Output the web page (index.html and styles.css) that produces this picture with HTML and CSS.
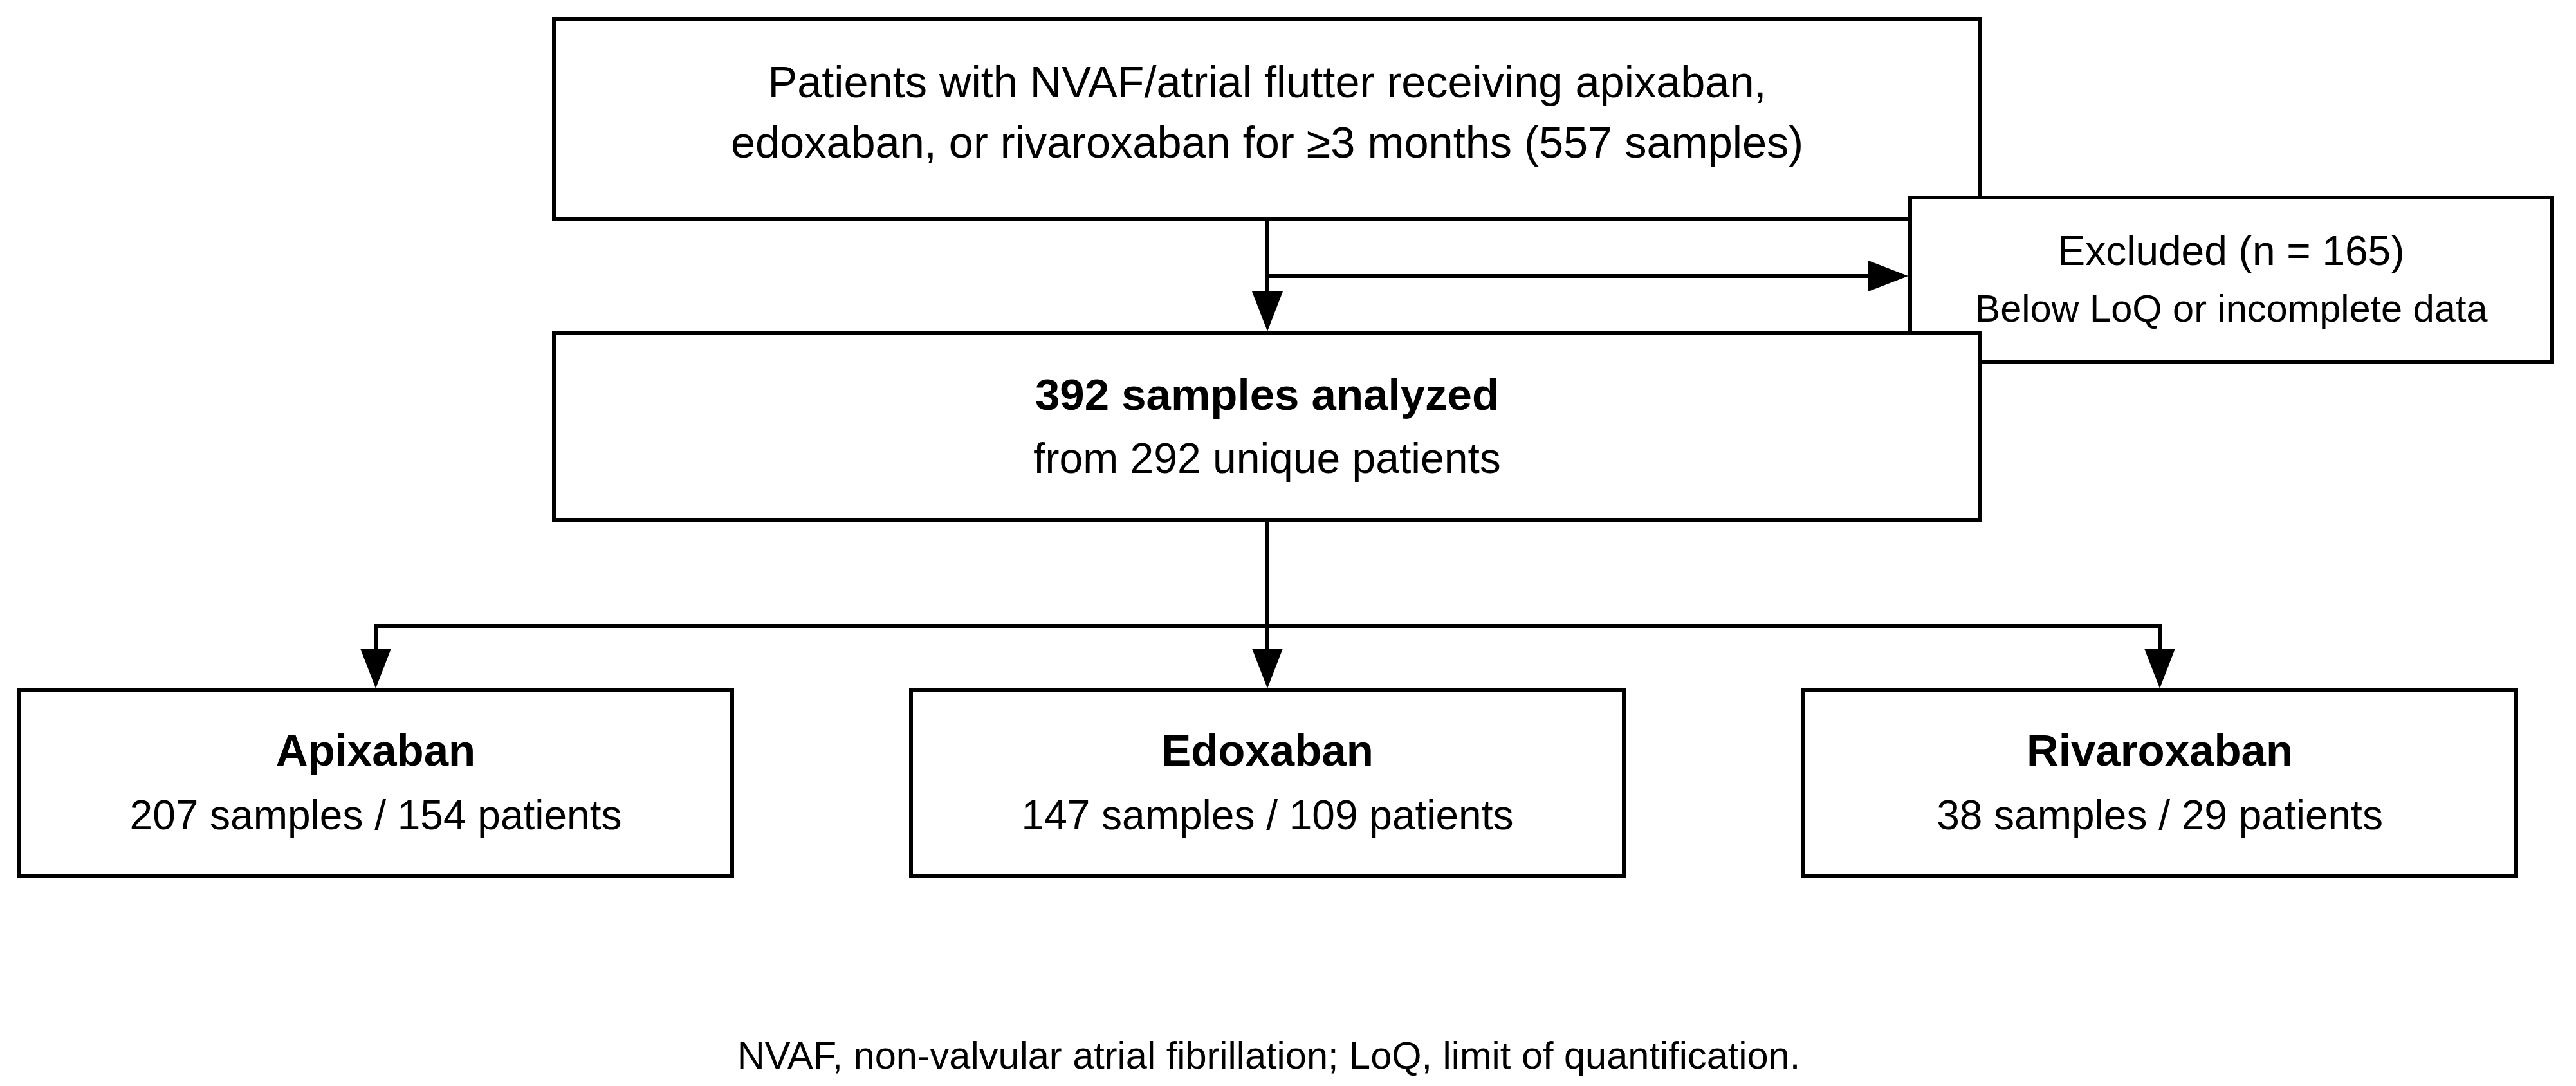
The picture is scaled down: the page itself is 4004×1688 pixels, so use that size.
FILE: index.html
```html
<!DOCTYPE html>
<html lang="en">
<head>
<meta charset="utf-8">
<title>Study flow diagram</title>
<link rel="stylesheet" href="styles.css">
</head>
<body>
<main class="figure">
  <div class="canvas">
    <svg class="wires" width="4004" height="1608" viewBox="0 0 4004 1608" aria-hidden="true">
      <g class="wire">
        <line x1="1970" y1="343" x2="1970" y2="455"/>
        <line x1="1970" y1="429" x2="2906" y2="429"/>
        <line x1="1970" y1="810" x2="1970" y2="1010"/>
        <line x1="581" y1="973" x2="3360" y2="973"/>
        <line x1="584" y1="970" x2="584" y2="1010"/>
        <line x1="3357" y1="970" x2="3357" y2="1010"/>
      </g>
      <g class="head">
        <polygon points="1946,453 1994,453 1970,515"/>
        <polygon points="2904,405 2904,453 2966,429"/>
        <polygon points="1946,1008 1994,1008 1970,1070"/>
        <polygon points="560,1008 608,1008 584,1070"/>
        <polygon points="3333,1008 3381,1008 3357,1070"/>
      </g>
    </svg>

    <div class="node node-top">
      <p class="line line-top">Patients with NVAF/atrial flutter receiving apixaban,</p>
      <p class="line line-top">edoxaban, or rivaroxaban for ≥3 months (557 samples)</p>
    </div>

    <div class="node node-excl">
      <p class="line line-excl">Excluded (n = 165)</p>
      <p class="line line-excl-sub">Below LoQ or incomplete data</p>
    </div>

    <div class="node node-mid">
      <p class="line line-title line-mid">392 samples analyzed</p>
      <p class="line line-mid-sub">from 292 unique patients</p>
    </div>

    <div class="node node-arm node-apix">
      <p class="line line-title line-arm">Apixaban</p>
      <p class="line line-arm-sub">207 samples / 154 patients</p>
    </div>

    <div class="node node-arm node-edox">
      <p class="line line-title line-arm">Edoxaban</p>
      <p class="line line-arm-sub">147 samples / 109 patients</p>
    </div>

    <div class="node node-arm node-riva">
      <p class="line line-title line-arm">Rivaroxaban</p>
      <p class="line line-arm-sub">38 samples / 29 patients</p>
    </div>
  </div>

  <p class="note">NVAF, non-valvular atrial fibrillation; LoQ, limit of quantification.</p>
</main>
</body>
</html>
```

FILE: styles.css
```css
html, body {
  margin: 0;
  padding: 0;
  background: #ffffff;
}

body {
  font-family: "Liberation Sans", Arial, sans-serif;
  color: #000000;
}

.figure {
  width: 4004px;
}

.canvas {
  position: relative;
  width: 4004px;
  height: 1608px;
}

.wires {
  position: absolute;
  left: 0;
  top: 0;
}

.wire line {
  stroke: #000000;
  stroke-width: 6;
}

.head polygon {
  fill: #000000;
}

.node {
  position: absolute;
  box-sizing: border-box;
  border: 6px solid #000000;
  background: #ffffff;
  display: flex;
  flex-direction: column;
  align-items: center;
  justify-content: center;
  text-align: center;
}

.line {
  margin: 0;
  white-space: nowrap;
}

.line-title {
  font-weight: 700;
  font-size: 69px;
}

/* top node */
.node-top {
  left: 858px;
  top: 27px;
  width: 2223px;
  height: 317px;
  padding-bottom: 22px;
}

.line-top {
  font-size: 68.5px;
  line-height: 94px;
}

/* excluded node */
.node-excl {
  left: 2966px;
  top: 304px;
  width: 1004px;
  height: 261px;
}

.line-excl {
  font-size: 64px;
  line-height: 90px;
}

.line-excl-sub {
  font-size: 59.5px;
  line-height: 90px;
}

/* analysed node */
.node-mid {
  left: 858px;
  top: 515px;
  width: 2223px;
  height: 296px;
}

.line-mid {
  line-height: 99px;
}

.line-mid-sub {
  font-size: 66px;
  line-height: 99px;
}

/* treatment arms */
.node-arm {
  top: 1070px;
  width: 1114px;
  height: 294px;
}

.node-apix { left: 27px; }
.node-edox { left: 1413px; }
.node-riva { left: 2800px; }

.line-arm {
  line-height: 100px;
}

.line-arm-sub {
  font-size: 64px;
  line-height: 100px;
}

.note {
  margin: 0;
  padding-right: 60px;
  font-size: 59.5px;
  line-height: 66px;
  text-align: center;
}
```
